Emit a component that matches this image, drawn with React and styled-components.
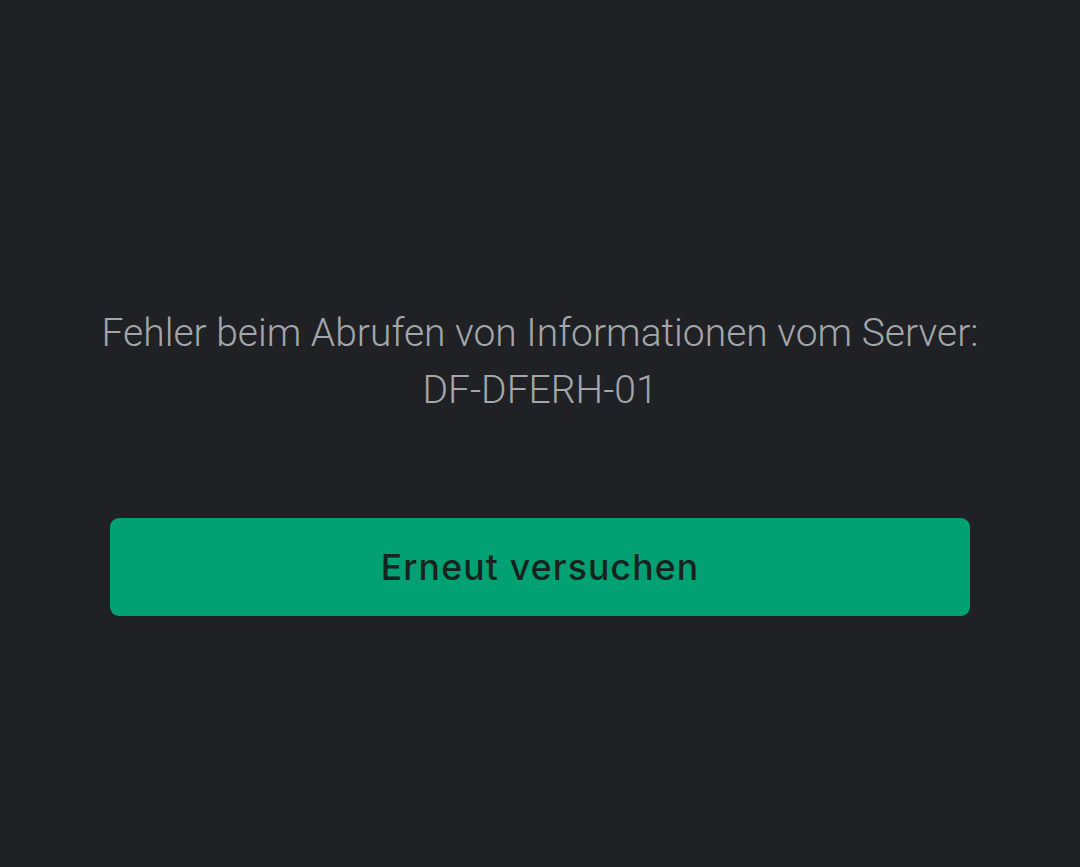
import React from 'react';
import styled, { createGlobalStyle } from 'styled-components';

const GlobalStyle = createGlobalStyle`
  html, body {
    margin: 0;
    padding: 0;
    background: #202124;
  }
`;

const Screen = styled.div`
  width: 1080px;
  height: 867px;
  background: #202124;
  display: flex;
  flex-direction: column;
  align-items: center;
  padding-top: 305px;
  box-sizing: border-box;
`;

const Message = styled.p`
  margin: 0;
  width: 1040px;
  text-align: center;
  font-family: Roboto, "Liberation Sans", sans-serif;
  font-size: 39px;
  font-weight: 300;
  line-height: 57px;
  color: #a3a6ab;
`;

const RetryButton = styled.button`
  margin-top: 99px;
  width: 860px;
  height: 98px;
  border: none;
  border-radius: 9px;
  background: #01a173;
  color: #16231e;
  font-family: Inter, Roboto, sans-serif;
  font-size: 35.5px;
  font-weight: 500;
  letter-spacing: 1.2px;
  cursor: pointer;
`;

export default function App() {
  return (
    <>
      <GlobalStyle />
      <Screen>
        <Message>
          Fehler beim Abrufen von Informationen vom Server:
          <br />
          DF-DFERH-01
        </Message>
        <RetryButton>Erneut versuchen</RetryButton>
      </Screen>
    </>
  );
}
